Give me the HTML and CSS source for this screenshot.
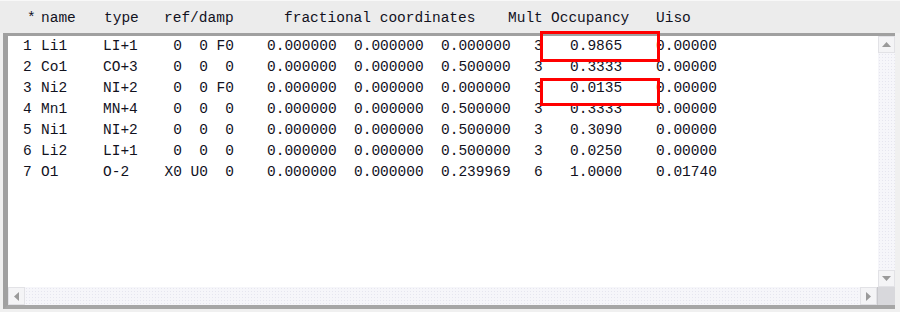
FILE: index.html
```html
<!DOCTYPE html>
<html lang="en">
<head>
    <meta charset="UTF-8">
    <title>Atoms</title>
    <link rel="stylesheet" href="styles.css">
</head>
<body>
    <div class="atom-panel">
        <div class="atom-header">
            <span></span>
            <span>*</span>
            <span>name</span>
            <span>type</span>
            <span>ref/damp</span>
            <span>fractional coordinates</span>
            <span>Mult</span>
            <span>Occupancy</span>
            <span>Uiso</span>
        </div>

        <div class="atom-box">
            <div class="atom-main">
                <div class="atom-list">
                    <div class="atom-row"><span></span><span>1</span><span>Li1</span><span>LI+1</span><span class="r">0</span><span class="r">0</span><span class="r">F0</span><span></span><span>0.000000</span><span>0.000000</span><span>0.000000</span><span>3</span><span>0.9865</span><span>0.00000</span></div>
                    <div class="atom-row"><span></span><span>2</span><span>Co1</span><span>CO+3</span><span class="r">0</span><span class="r">0</span><span class="r">0</span><span></span><span>0.000000</span><span>0.000000</span><span>0.500000</span><span>3</span><span>0.3333</span><span>0.00000</span></div>
                    <div class="atom-row"><span></span><span>3</span><span>Ni2</span><span>NI+2</span><span class="r">0</span><span class="r">0</span><span class="r">F0</span><span></span><span>0.000000</span><span>0.000000</span><span>0.000000</span><span>3</span><span>0.0135</span><span>0.00000</span></div>
                    <div class="atom-row"><span></span><span>4</span><span>Mn1</span><span>MN+4</span><span class="r">0</span><span class="r">0</span><span class="r">0</span><span></span><span>0.000000</span><span>0.000000</span><span>0.500000</span><span>3</span><span>0.3333</span><span>0.00000</span></div>
                    <div class="atom-row"><span></span><span>5</span><span>Ni1</span><span>NI+2</span><span class="r">0</span><span class="r">0</span><span class="r">0</span><span></span><span>0.000000</span><span>0.000000</span><span>0.500000</span><span>3</span><span>0.3090</span><span>0.00000</span></div>
                    <div class="atom-row"><span></span><span>6</span><span>Li2</span><span>LI+1</span><span class="r">0</span><span class="r">0</span><span class="r">0</span><span></span><span>0.000000</span><span>0.000000</span><span>0.500000</span><span>3</span><span>0.0250</span><span>0.00000</span></div>
                    <div class="atom-row"><span></span><span>7</span><span>O1</span><span>O-2</span><span class="r">X0</span><span class="r">U0</span><span class="r">0</span><span></span><span>0.000000</span><span>0.000000</span><span>0.239969</span><span>6</span><span>1.0000</span><span>0.01740</span></div>
                </div>
                <div class="vscroll">
                    <div class="sb-btn">
                        <svg width="9" height="5" viewBox="0 0 9 5"><path d="M0 5 L4.5 0 L9 5 Z" fill="#9a9a9a"/></svg>
                    </div>
                    <div class="sb-track"></div>
                    <div class="sb-btn">
                        <svg width="9" height="5" viewBox="0 0 9 5"><path d="M0 0 L4.5 5 L9 0 Z" fill="#9a9a9a"/></svg>
                    </div>
                </div>
            </div>
            <div class="hscroll-row">
                <div class="hscroll">
                    <div class="sb-btn">
                        <svg width="5" height="9" viewBox="0 0 5 9"><path d="M5 0 L0 4.5 L5 9 Z" fill="#9a9a9a"/></svg>
                    </div>
                    <div class="sb-track"></div>
                    <div class="sb-btn">
                        <svg width="5" height="9" viewBox="0 0 5 9"><path d="M0 0 L5 4.5 L0 9 Z" fill="#9a9a9a"/></svg>
                    </div>
                </div>
                <div class="sb-corner"></div>
            </div>
        </div>

        <!-- highlight marks drawn over the list -->
        <div class="mark mark-1"></div>
        <div class="mark mark-2"></div>
    </div>
</body>
</html>
```

FILE: styles.css
```css
body {
    margin: 0;
    background: #f0f0f0;
    font-family: 'Liberation Mono', 'Courier New', monospace;
    font-size: 14.5px;
    color: #12121e;
}

.atom-panel {
    position: relative;
    width: 900px;
    height: 312px;
}

.atom-header {
    display: grid;
    grid-template-columns: 27px 14px 63px 60px 120px 224px 43px 105px 1fr;
    height: 33px;
    padding-top: 1px;
    line-height: 32px;
    white-space: pre;
    background: #ececec;
    border-top: 1px solid #f8f8f8;
    box-sizing: border-box;
}

.atom-box {
    margin-left: 3px;
    width: 892px;
    height: 276px;
    box-sizing: border-box;
    border-left: 5px solid #a0a0a0;
    border-top: 3px solid #a0a0a0;
    border-bottom: 4px solid #a6a6a6;
    display: flex;
    flex-direction: column;
    background: #ffffff;
}

.atom-main {
    flex: 1;
    display: flex;
    min-height: 0;
}

.atom-list {
    flex: 1;
    background: #ffffff;
}

.atom-row {
    display: grid;
    grid-template-columns: 15px 18px 62px 57px 22px 26px 26px 33px 87px 87px 93px 36px 86px 1fr;
    height: 21px;
    line-height: 21px;
    white-space: pre;
}

.atom-row .r {
    text-align: right;
}

.vscroll {
    width: 17px;
    display: flex;
    flex-direction: column;
}

.hscroll-row {
    display: flex;
    height: 18px;
}

.hscroll {
    flex: 1;
    display: flex;
}

.sb-btn {
    width: 17px;
    height: 17px;
    flex: none;
    display: flex;
    align-items: center;
    justify-content: center;
    background: #f4f4f6;
    border: 1px solid #e2e2e6;
    box-sizing: border-box;
}

.hscroll .sb-btn {
    height: 18px;
}

.sb-track {
    flex: 1;
    background-color: #f6f6fa;
    background-image: radial-gradient(#e6e6ef 0.6px, transparent 0.8px);
    background-size: 3px 3px;
}

.sb-corner {
    width: 17px;
    background: #d8d8dc;
    border-left: 1px solid #c8c8cc;
}

.mark {
    position: absolute;
    left: 540px;
    width: 120px;
    border: 3px solid #ff0000;
    box-sizing: border-box;
}

.mark-1 {
    top: 31px;
    height: 31px;
}

.mark-2 {
    top: 78px;
    height: 28px;
}
```
